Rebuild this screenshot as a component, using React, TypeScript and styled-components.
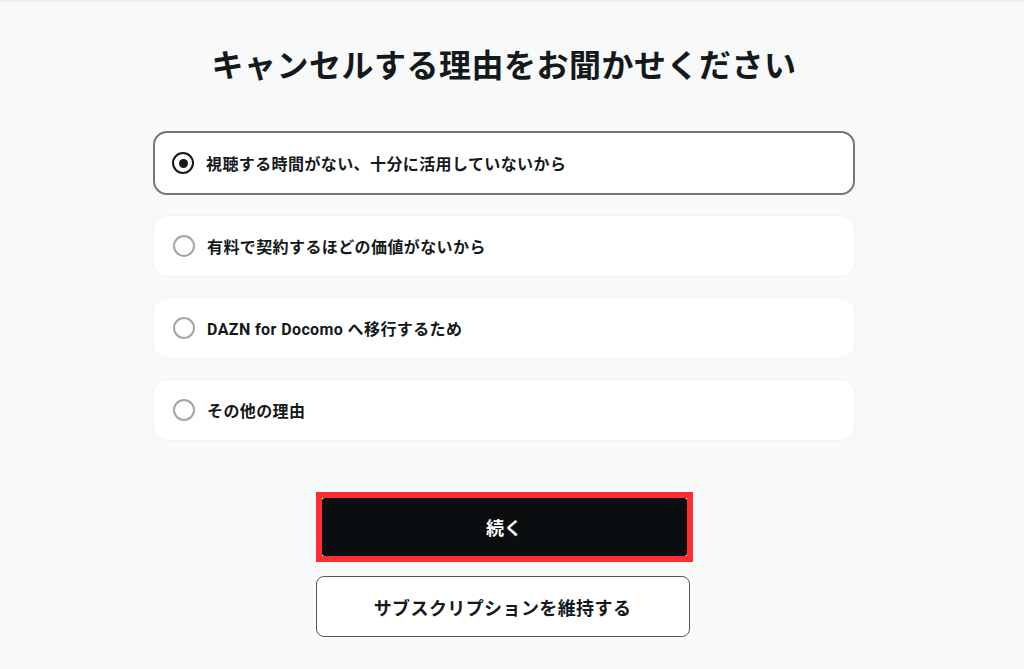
import React, { useState } from "react";
import styled, { createGlobalStyle } from "styled-components";

const GlobalStyle = createGlobalStyle`
  html, body {
    margin: 0;
    padding: 0;
    background: #f8f9f9;
  }
  body {
    font-family: Roboto, "Noto Sans CJK JP", sans-serif;
    color: #14191c;
  }
  * { box-sizing: border-box; }
`;

const Page = styled.div`
  min-height: 669px;
  border-top: 2px solid #eceeee;
  padding: 40px 16px 0 0;
  display: flex;
  flex-direction: column;
  align-items: center;
`;

const Title = styled.h1`
  margin: 0;
  font-size: 32px;
  line-height: 48px;
  font-weight: 700;
  letter-spacing: 0.5px;
  color: #14191c;
`;

const Options = styled.div`
  margin-top: 41px;
  width: 702px;
  display: flex;
  flex-direction: column;
  gap: 20px;
`;

const Card = styled.label<{ $selected: boolean }>`
  display: flex;
  align-items: center;
  gap: 12px;
  height: ${(p) => (p.$selected ? "64px" : "62px")};
  padding-left: ${(p) => (p.$selected ? "17px" : "19px")};
  background: #ffffff;
  border: ${(p) => (p.$selected ? "2px solid #737679" : "1px solid #f1f2f2")};
  border-radius: 14px;
  cursor: pointer;
`;

const Radio = styled.span<{ $selected: boolean }>`
  width: 22px;
  height: 22px;
  flex: none;
  border-radius: 50%;
  border: 2px solid ${(p) => (p.$selected ? "#14191c" : "#a3a5a7")};
  display: flex;
  align-items: center;
  justify-content: center;
  &::after {
    content: "";
    width: 9px;
    height: 9px;
    border-radius: 50%;
    background: #14191c;
    display: ${(p) => (p.$selected ? "block" : "none")};
  }
`;

const OptionText = styled.span`
  font-size: 16px;
  font-weight: 700;
  letter-spacing: 0.4px;
  color: #14191c;
`;

const Actions = styled.div`
  margin-top: 51px;
  display: flex;
  flex-direction: column;
  align-items: center;
  gap: 14px;
`;

const Highlight = styled.div`
  border: 6px solid #ff2d2f;
  width: 377px;
`;

const PrimaryButton = styled.button`
  display: flex;
  align-items: center;
  justify-content: center;
  width: 100%;
  height: 58px;
  border: none;
  border-radius: 3px;
  background: #0a0e11;
  color: #ffffff;
  font-family: inherit;
  font-size: 18px;
  font-weight: 700;
  cursor: pointer;
`;

const SecondaryButton = styled.button`
  display: flex;
  align-items: center;
  justify-content: center;
  width: 374px;
  height: 61px;
  margin-left: -3px;
  border: 1px solid #55595c;
  border-radius: 8px;
  background: #ffffff;
  color: #14191c;
  font-family: inherit;
  font-size: 18px;
  font-weight: 700;
  letter-spacing: 0.4px;
  cursor: pointer;
`;

const reasons = [
  "視聴する時間がない、十分に活用していないから",
  "有料で契約するほどの価値がないから",
  "DAZN for Docomo へ移行するため",
  "その他の理由",
];

export default function App() {
  const [selected, setSelected] = useState(0);
  return (
    <>
      <GlobalStyle />
      <Page>
        <Title>キャンセルする理由をお聞かせください</Title>
        <Options>
          {reasons.map((r, i) => (
            <Card key={r} $selected={selected === i} onClick={() => setSelected(i)}>
              <Radio $selected={selected === i} />
              <OptionText>{r}</OptionText>
            </Card>
          ))}
        </Options>
        <Actions>
          <Highlight>
            <PrimaryButton>続く</PrimaryButton>
          </Highlight>
          <SecondaryButton>サブスクリプションを維持する</SecondaryButton>
        </Actions>
      </Page>
    </>
  );
}
